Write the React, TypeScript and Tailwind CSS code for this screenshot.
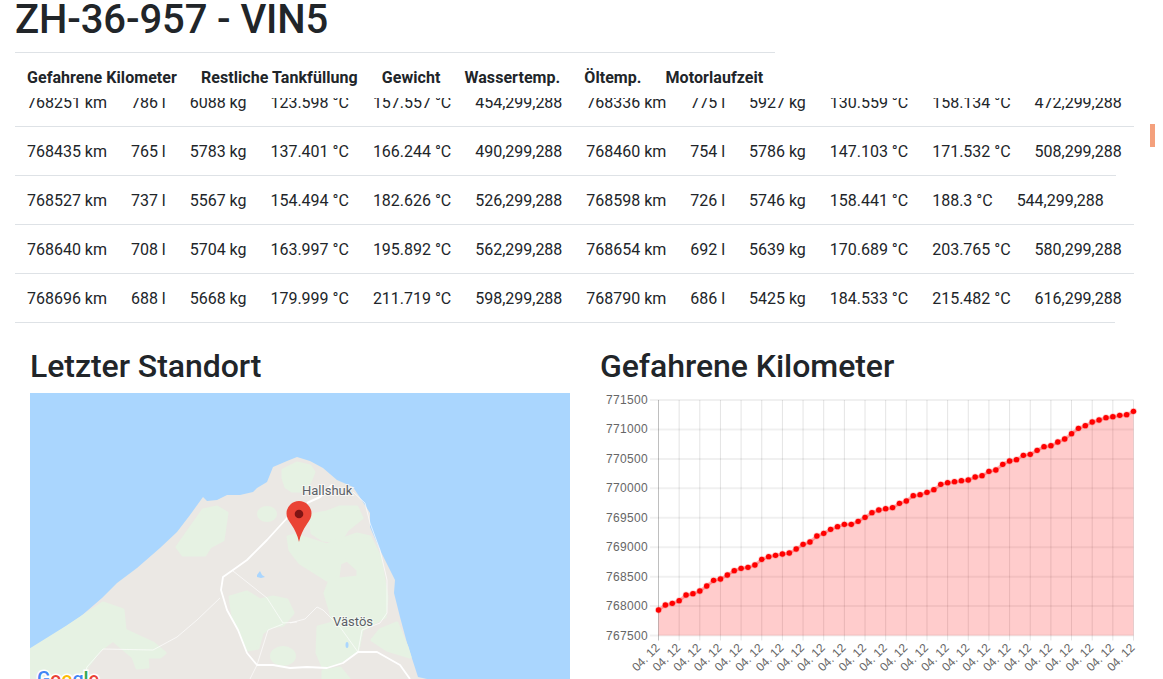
const font = "font-['Roboto',sans-serif]";

// each row is as wide as its cells, so the lines end at different places
const rows = [
  ["768251 km", "786 l", "6088 kg", "123.598 °C", "157.557 °C", "454,299,288", "768336 km", "775 l", "5927 kg", "130.559 °C", "158.134 °C", "472,299,288"],
  ["768435 km", "765 l", "5783 kg", "137.401 °C", "166.244 °C", "490,299,288", "768460 km", "754 l", "5786 kg", "147.103 °C", "171.532 °C", "508,299,288"],
  ["768527 km", "737 l", "5567 kg", "154.494 °C", "182.626 °C", "526,299,288", "768598 km", "726 l", "5746 kg", "158.441 °C", "188.3 °C", "544,299,288"],
  ["768640 km", "708 l", "5704 kg", "163.997 °C", "195.892 °C", "562,299,288", "768654 km", "692 l", "5639 kg", "170.689 °C", "203.765 °C", "580,299,288"],
  ["768696 km", "688 l", "5668 kg", "179.999 °C", "211.719 °C", "598,299,288", "768790 km", "686 l", "5425 kg", "184.533 °C", "215.482 °C", "616,299,288"],
];

const headers = ["Gefahrene Kilometer", "Restliche Tankfüllung", "Gewicht", "Wassertemp.", "Öltemp.", "Motorlaufzeit"];

// ─── Chart ────────────────────────────────────────────────────────────────────

// read off the reference, 3x pixels from y=385
const raw = [
  675, 660, 655, 647, 630, 626, 618, 603, 586, 582, 570, 557, 550, 547, 540, 523, 515, 511, 507, 504, 492, 478, 471, 453, 445, 433, 425, 418, 418, 409, 397,
  383, 375, 371, 368, 355, 348, 332, 329, 322, 314, 298, 293, 290, 287, 285, 276, 272, 259, 255, 238, 228, 224, 211, 208, 196, 185, 182, 171, 162, 146, 130, 122, 111, 105, 98, 95, 91, 89, 79,
];

const LEFT = 658.5;
const RIGHT = 1133.5;
const TOP = 400;
const BOTTOM = 635.5;
const pts = raw.map((v, i) => [LEFT + ((RIGHT - LEFT) * i) / 69, 385 + v / 3]);
const line = pts.map((p) => `${p[0].toFixed(1)},${p[1].toFixed(1)}`).join(" ");
const yLabels = [771500, 771000, 770500, 770000, 769500, 769000, 768500, 768000, 767500];
const ticks = Array.from({ length: 24 }, (_, i) => LEFT + ((RIGHT - LEFT) * i) / 23);

const Chart = () => (
  <svg viewBox="600 393 540 286" className="block w-[540px] h-[286px]">
    {yLabels.map((v, i) => {
      const y = TOP + ((BOTTOM - TOP) * i) / 8;
      return (
        <g key={v}>
          <line x1={650} x2={RIGHT} y1={y} y2={y} stroke="#000" strokeOpacity={0.06} strokeWidth={2} />
          <text x={648} y={y + 4} textAnchor="end" fontSize={12} letterSpacing={0.33} fill="#666" fontFamily="'Liberation Sans',sans-serif">
            {v}
          </text>
        </g>
      );
    })}
    {ticks.map((x, i) => (
      <g key={i}>
        <line x1={x} x2={x} y1={TOP} y2={BOTTOM + 5} stroke="#000" strokeOpacity={i === 0 ? 0.25 : 0.11} />
        <text
          x={x + 2}
          y={BOTTOM + 13}
          textAnchor="end"
          fontSize={12}
          fill="#666"
          fontFamily="'Liberation Sans',sans-serif"
          transform={`rotate(-45 ${x + 2} ${BOTTOM + 13})`}
        >
          04. 12
        </text>
      </g>
    ))}
    <polygon points={`${LEFT},${BOTTOM} ${line} ${RIGHT},${BOTTOM}`} fill="#f00" fillOpacity={0.2} />
    <polyline points={line} fill="none" stroke="#f00" strokeOpacity={0.3} strokeWidth={3} />
    {pts.map((p, i) => (
      <circle key={i} cx={p[0]} cy={p[1]} r={2.7} fill="#f00" stroke="#f00" strokeOpacity={0.2} strokeWidth={1.5} />
    ))}
  </svg>
);

// ─── Map ──────────────────────────────────────────────────────────────────────

const green = [
  "283,470 297,463 310,466 314,472 310,482 302,491 292,491 286,487 283,478",
  "177,547 203,510 217,507 227,513 223,540 210,547 205,555 183,555",
  "30,650 67,627 103,603 123,610 125,630 153,643 165,653 160,657 147,657 148,667 137,668 133,657 113,640 100,650 87,667 83,679 30,679",
  "230,597 247,592 260,600 273,597 287,600 293,613 283,625 270,627 262,633 258,648 247,650 240,630 233,617",
  "310,515 327,512 340,507 357,507 362,518 347,530 340,542 323,540 312,533",
  "288,537 295,535 327,545 340,540 357,534 370,537 380,557 387,597 385,617 370,625 362,630 358,650 340,662 323,667 317,653 318,627 333,623 330,610 325,593 330,580 358,577 358,570 347,560 340,563 338,577 327,580 300,563 290,550",
  "372,640 380,630 397,623 407,647 410,657 387,650",
  "323,671 340,668 349,679 323,679",
];

const land =
  "30,649 53,635 80,617 102,598 117,583 137,568 160,548 177,532 190,515 203,497 207,501 217,500 227,495 240,495 253,492 257,488 267,482 273,467 287,461 297,457 310,461 323,468 337,480 353,487 363,502 370,513 370,527 380,550 395,580 394,593 400,617 407,643 418,677 427,679 30,679";

const MapView = () => (
  <svg viewBox="30 393 540 286" className="block w-[540px] h-[286px] bg-[#aad6fe]">
    <polygon points={land} fill="#ebe8e4" />
    {green.map((g, i) => (
      <polygon key={i} points={g} fill="#e6f2e3" stroke="#e6f2e3" strokeWidth={3} strokeLinejoin="round" />
    ))}
    <ellipse cx={267} cy={514} rx={10} ry={8} fill="#e6f2e3" />
    <ellipse cx={283} cy={656} rx={13} ry={10} fill="#e6f2e3" />
    <g fill="none" stroke="#fff" strokeLinejoin="round">
      <polyline strokeWidth={1.8} points="288,517 267,540 247,560 233,570 223,577 221,590 227,610 238,630 247,653 257,665 273,665 290,668 307,667 327,668 343,663 358,652 377,652 400,665 410,679" />
      <polyline strokeWidth={2} points="307,503 320,497 332,485" />
      <g strokeWidth={1} strokeOpacity={0.65}>
        <polyline points="233,571 267,598 283,623 297,622" />
        <polyline points="283,624 268,630 257,665 250,679" />
        <polyline points="220,598 197,620 177,637 153,650 103,649 87,667 83,679" />
        <polyline points="290,623 305,619 317,607 323,610 340,627 358,652 362,630 380,623 387,613 387,580 380,550 370,523 365,503 353,492" />
      </g>
    </g>
    <path d="M257 575l3-4 2 4 3 2-4 1-4-1z" fill="#aad6fe" />
    <ellipse cx={347} cy={645} rx={1.5} ry={3} fill="#aad6fe" />
    <g fontFamily="'Roboto',sans-serif" fontSize={13} fill="#5b5f66" stroke="#fff" strokeOpacity={0.6} strokeWidth={2} style={{ paintOrder: "stroke" }}>
      <text x={302} y={495}>Hallshuk</text>
      <text x={333} y={626}>Västös</text>
    </g>
    <path d="M299 542c-1.500-7-4-12-8-18-3-4.500-4.500-7-4.500-10.500a12.500 12.500 0 0 1 25 0c0 3.500-1.500 6-4.500 10.500-4 6-6.500 11-8 18z" fill="#ea4335" />
    <circle cx={299} cy={514} r={4.3} fill="#7f1414" />
    <text x={37} y={686} fontFamily="'Roboto',sans-serif" fontSize={19.5} fontWeight={500} stroke="#fff" strokeWidth={3} style={{ paintOrder: "stroke" }}>
      <tspan fill="#4285f4">G</tspan>
      <tspan fill="#ea4335">o</tspan>
      <tspan fill="#fbbc05">o</tspan>
      <tspan fill="#4285f4">g</tspan>
      <tspan fill="#34a853">l</tspan>
      <tspan fill="#ea4335">e</tspan>
    </text>
  </svg>
);

// ─── Page ─────────────────────────────────────────────────────────────────────

export default function App() {
  return (
    <div className={`relative h-[679px] overflow-hidden bg-white text-[#212529] ${font}`}>
      {/* scrollbar handle */}
      <div className="absolute left-[1150px] top-[124px] w-[5px] h-[23px] bg-[#f4a07c]" />

      <div className="pl-[15px]">
        <h1 className="text-[40px] leading-[40px] font-medium tracking-[-0.12px] mb-[12px]">ZH-36-957 - VIN5</h1>

        <div className="inline-flex border-t border-[#dee2e6] font-bold tracking-[0.06px]">
          {headers.map((h) => (
            <div key={h} className="px-3 pt-[13px] h-[45px] leading-6 whitespace-nowrap">
              {h}
            </div>
          ))}
        </div>

        {/* scrolled table body, first row partly hidden */}
        <div className="h-[226px] overflow-hidden">
          <div className="-mt-[21px] flex flex-col items-start tracking-[-0.015px]">
            {rows.map((row) => (
              <div key={row[0]} className="inline-flex border-t border-[#dee2e6] whitespace-nowrap leading-6">
                {row.map((c, i) => (
                  <div key={i} className="px-3 pt-[13px] pb-[11px]">
                    {c}
                  </div>
                ))}
              </div>
            ))}
            <div className="w-[1100px] border-t border-[#dee2e6]" />
          </div>
        </div>

        <div className="mt-[23px] grid grid-cols-[570px_570px]">
          <div className="px-[15px]">
            <h2 className="text-[32px] leading-[38px] font-medium tracking-[-0.05px] mb-2">Letzter Standort</h2>
            <MapView />
          </div>
          <div className="px-[15px]">
            <h2 className="text-[32px] leading-[38px] font-medium tracking-[-0.05px] mb-2">Gefahrene Kilometer</h2>
            <Chart />
          </div>
        </div>
      </div>
    </div>
  );
}
